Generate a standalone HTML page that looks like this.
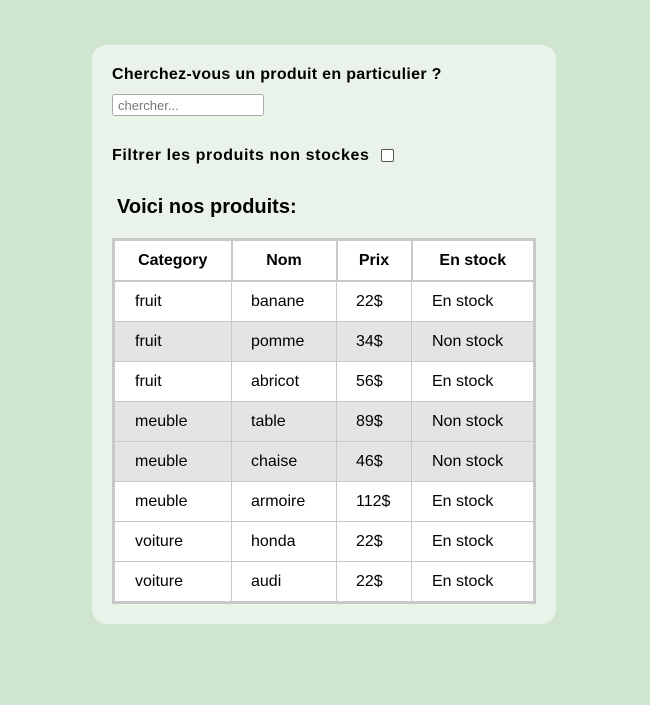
<!DOCTYPE html>
<html><head><meta charset="utf-8"><style>
html,body{margin:0;padding:0;}
body{width:650px;height:705px;background:#cfe5cf;font-family:"Liberation Sans",sans-serif;color:#000;position:relative;overflow:hidden;}
.card{position:absolute;left:92px;top:45px;width:464px;height:579px;background:#e9f3e9;border-radius:14px;}
.q{position:absolute;left:112px;top:66px;font-size:16px;font-weight:bold;letter-spacing:0.3px;}
.inp{position:absolute;left:112px;top:94px;border:1px solid #aaa;border-radius:3px;background:#fff;box-sizing:border-box;width:152px;height:22px;font-size:13px;color:#777;padding:3px 5px;}
.f{position:absolute;left:112px;top:147px;font-size:16px;font-weight:bold;letter-spacing:0.6px;}
.cb{position:absolute;left:381px;top:149px;width:13px;height:13px;border:1px solid #555;border-radius:2px;box-sizing:border-box;background:#fff;}
.h{position:absolute;left:117px;top:196px;font-size:20px;font-weight:bold;}
table{position:absolute;left:112px;top:238px;width:424px;table-layout:fixed;border-collapse:collapse;border:3px solid #c8c8c8;font-size:16px;background:#fff;}
td,th{border:1px solid #c8c8c8;padding:1px 0 0 0;height:38px;text-align:left;}
th{border-width:2px;height:38px;text-align:center;font-weight:bold;}
td:nth-child(1){padding-left:20px}
td:nth-child(2){padding-left:19px}
td:nth-child(3){padding-left:19px}
td:nth-child(4){padding-left:20px}
tr.g td{background:#e4e4e4;}
</style></head><body>
<div class="card"></div>
<div class="q">Cherchez-vous un produit en particulier ?</div>
<div class="inp">chercher...</div>
<div class="f">Filtrer les produits non stockes</div>
<div class="cb"></div>
<div class="h">Voici nos produits:</div>
<table>
<colgroup><col style="width:118px"><col style="width:105px"><col style="width:75px"><col style="width:123px"></colgroup>
<tr><th>Category</th><th>Nom</th><th>Prix</th><th>En stock</th></tr>
<tr><td>fruit</td><td>banane</td><td>22$</td><td>En stock</td></tr>
<tr class="g"><td>fruit</td><td>pomme</td><td>34$</td><td>Non stock</td></tr>
<tr><td>fruit</td><td>abricot</td><td>56$</td><td>En stock</td></tr>
<tr class="g"><td>meuble</td><td>table</td><td>89$</td><td>Non stock</td></tr>
<tr class="g"><td>meuble</td><td>chaise</td><td>46$</td><td>Non stock</td></tr>
<tr><td>meuble</td><td>armoire</td><td>112$</td><td>En stock</td></tr>
<tr><td>voiture</td><td>honda</td><td>22$</td><td>En stock</td></tr>
<tr><td>voiture</td><td>audi</td><td>22$</td><td>En stock</td></tr>
</table>
</body></html>
